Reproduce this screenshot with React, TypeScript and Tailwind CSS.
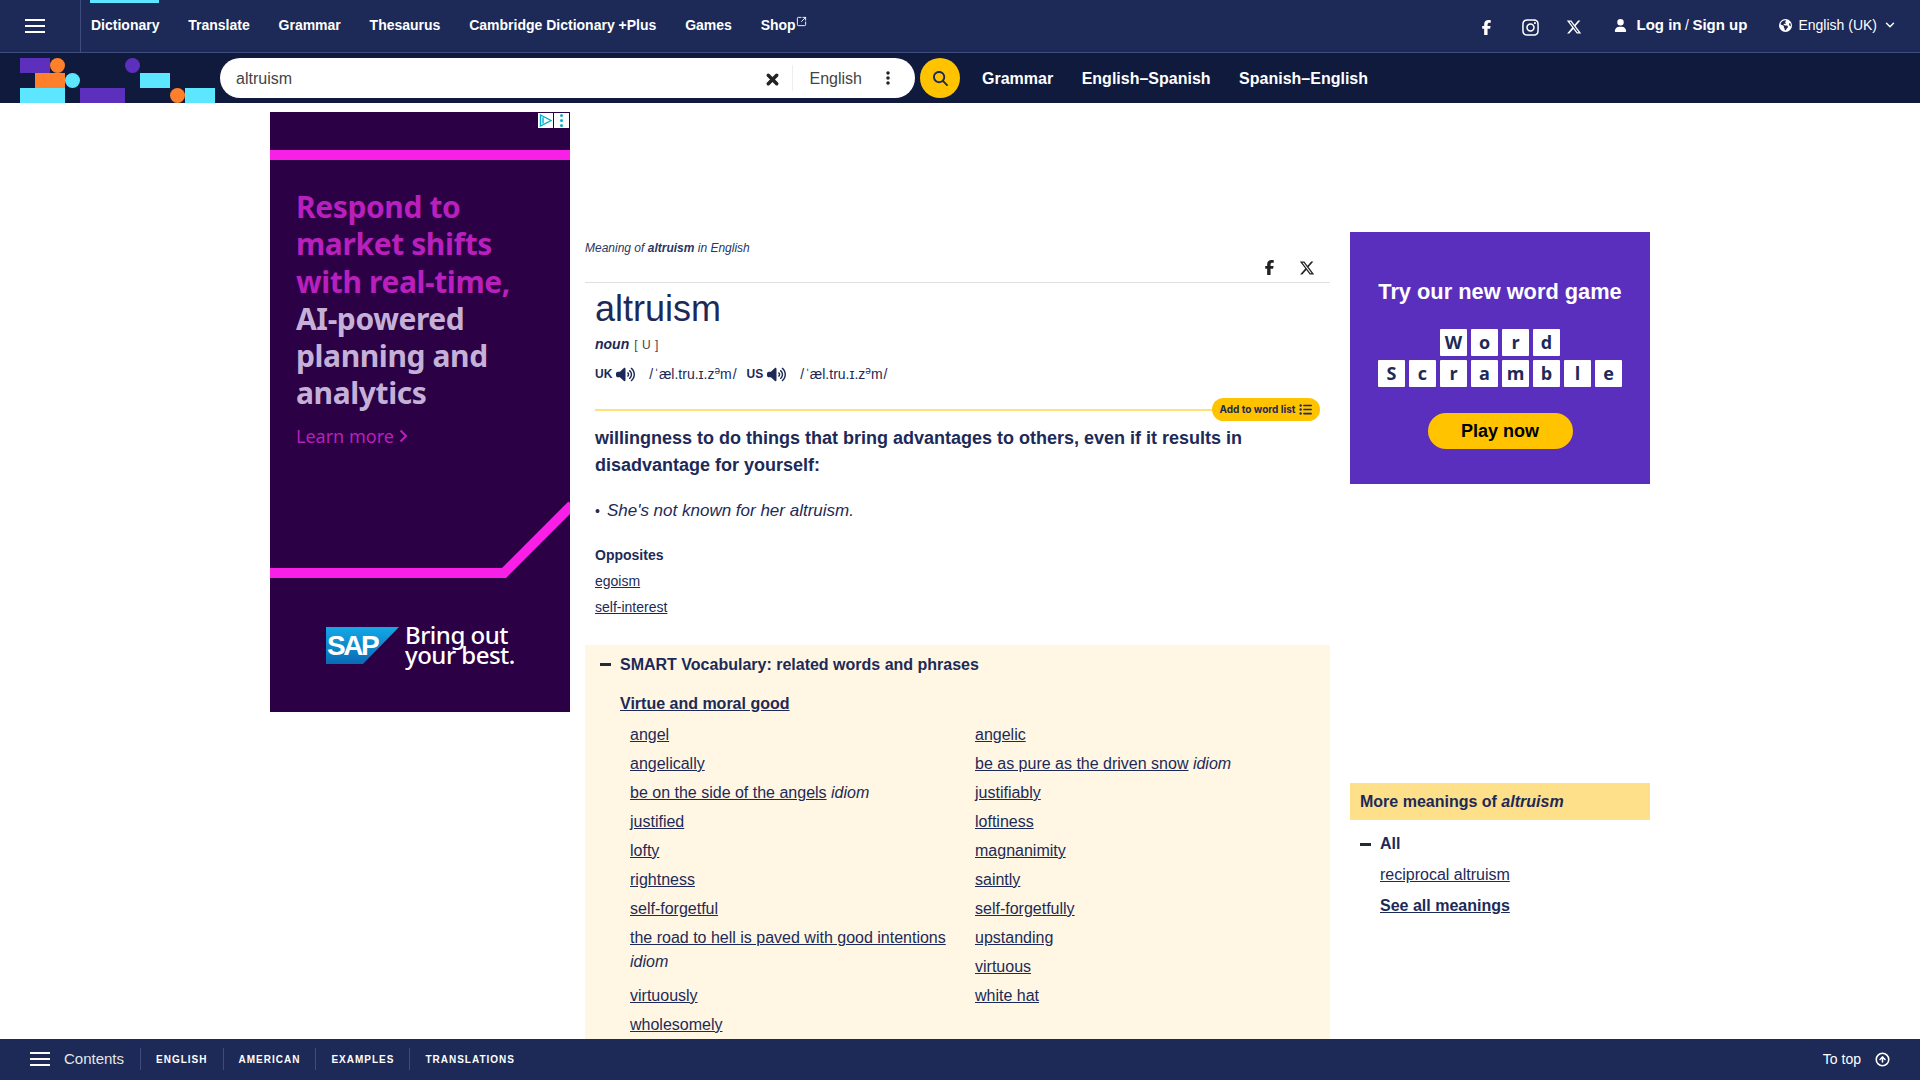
import { ChevronDown, SquareArrowOutUpRight, CircleArrowUp } from 'lucide-react';
import {
  FaFacebookF,
  FaInstagram,
  FaXTwitter,
  FaUser,
  FaEarthAmericas,
  FaXmark,
  FaEllipsisVertical,
  FaMagnifyingGlass,
  FaVolumeHigh,
  FaListUl,
} from 'react-icons/fa6';

const NAV = ['Dictionary', 'Translate', 'Grammar', 'Thesaurus', 'Cambridge Dictionary +Plus', 'Games'];

const LEFT_WORDS: [string, boolean?][] = [
  ['angel'],
  ['angelically'],
  ['be on the side of the angels', true],
  ['justified'],
  ['lofty'],
  ['rightness'],
  ['self-forgetful'],
  ['the road to hell is paved with good intentions', true],
  ['virtuously'],
  ['wholesomely'],
];

const RIGHT_WORDS: [string, boolean?][] = [
  ['angelic'],
  ['be as pure as the driven snow', true],
  ['justifiably'],
  ['loftiness'],
  ['magnanimity'],
  ['saintly'],
  ['self-forgetfully'],
  ['upstanding'],
  ['virtuous'],
  ['white hat'],
];

function Logo() {
  return (
    <svg width="195" height="45" viewBox="0 0 195 45" className="ml-5 shrink-0">
      <rect x="0" y="0" width="30" height="15" fill="#5d2fbd" />
      <circle cx="37.5" cy="7.5" r="7.5" fill="#ff7f2a" />
      <rect x="15" y="15" width="30" height="15" fill="#ff7f2a" />
      <circle cx="52.5" cy="22.5" r="7.5" fill="#5ce6ff" />
      <rect x="0" y="30" width="45" height="15" fill="#5ce6ff" />
      <rect x="60" y="30" width="45" height="15" fill="#5d2fbd" />
      <circle cx="112.5" cy="7.5" r="7.5" fill="#5d2fbd" />
      <rect x="120" y="15" width="30" height="15" fill="#5ce6ff" />
      <circle cx="157.5" cy="37.5" r="7.5" fill="#ff7f2a" />
      <rect x="165" y="30" width="30" height="15" fill="#5ce6ff" />
    </svg>
  );
}

function Hamburger({ className }: { className: string }) {
  return (
    <div className={className}>
      <div className="h-[2px] bg-white" />
      <div className="h-[2px] bg-white" />
      <div className="h-[2px] bg-white" />
    </div>
  );
}

function Dash() {
  return <div className="w-[11px] h-[3px] bg-[#222a3a] shrink-0" />;
}

function WordItem({ word, idiom }: { word: string; idiom?: boolean }) {
  const twoLines = word.startsWith('the road');
  return (
    <div className={twoLines ? 'text-[16px] leading-[24px] mb-[10px]' : 'text-[16px] leading-[24px] mb-[5px]'}>
      <span className="underline">{word}</span>
      {idiom && <i> idiom</i>}
    </div>
  );
}

function Tiles({ text }: { text: string }) {
  return (
    <div className="flex justify-center gap-[4px]">
      {text.split('').map((c, i) => (
        <div
          key={i}
          className="w-[27px] h-[27px] bg-white rounded-[1px] flex items-center justify-center text-[#1d2a57] text-[18px] font-bold font-['Open_Sans',sans-serif]"
        >
          {c}
        </div>
      ))}
    </div>
  );
}

function Ipa() {
  return (
    <span className="ml-[14px]">
      <span className="mr-[1px]">/</span>ˈæl.tru.ɪ.z<sup className="text-[10px] leading-none">ə</sup>m<span className="ml-[1px]">/</span>
    </span>
  );
}

function Ad() {
  return (
    <div className="relative w-[300px] h-[600px] bg-[#2c0045] shrink-0 overflow-hidden font-['Noto_Sans',sans-serif]">
      <svg width="300" height="600" viewBox="0 0 300 600" className="absolute inset-0">
        <rect x="0" y="38" width="300" height="10" fill="#f81fe6" />
        <path d="M0 461 H234 L302 393" fill="none" stroke="#f81fe6" strokeWidth="10" />
      </svg>
      <div className="absolute top-[1px] right-[1px] flex gap-[1px]">
        <div className="w-[15px] h-[15px] bg-white flex items-center justify-center">
          <svg width="13" height="13" viewBox="0 0 13 13">
            <path d="M1.5 1 L12 6.5 L1.5 12 Z M4 3.5 V9.5" fill="none" stroke="#00aecd" strokeWidth="1.4" />
          </svg>
        </div>
        <div className="w-[15px] h-[15px] bg-white flex flex-col items-center justify-center gap-[2px]">
          <div className="w-[3px] h-[3px] rounded-full bg-[#00aecd]" />
          <div className="w-[3px] h-[3px] rounded-full bg-[#00aecd]" />
          <div className="w-[3px] h-[3px] rounded-full bg-[#00aecd]" />
        </div>
      </div>
      <div className="relative pl-[26px] pt-[76px]">
        <div className="text-[30px] leading-[37.3px] font-bold text-[#b81fbc] tracking-[-0.4px]">
          Respond to
          <br />
          market shifts
          <br />
          with real-time,
        </div>
        <div className="text-[30px] leading-[37.3px] font-bold text-[#c5b0d8] tracking-[-0.4px]">
          AI-powered
          <br />
          planning and
          <br />
          analytics
        </div>
        <div className="mt-[12px] text-[18px] leading-[24px] text-[#b81fbc] flex items-center gap-[5px]">
          Learn more
          <svg width="9" height="14" viewBox="0 0 9 14">
            <path d="M1.5 1.5 L7 7 L1.5 12.5" fill="none" stroke="#b81fbc" strokeWidth="2" />
          </svg>
        </div>
      </div>
      <div className="absolute left-[56px] top-[515px] flex items-start gap-[6px]">
        <div className="relative w-[73px] h-[37px]">
          <svg width="73" height="37" viewBox="0 0 73 37" className="absolute inset-0">
            <defs>
              <linearGradient id="sapBlue" x1="0" y1="0" x2="0" y2="1">
                <stop offset="0" stopColor="#14a8e6" />
                <stop offset="1" stopColor="#0a6ab5" />
              </linearGradient>
            </defs>
            <path d="M0 0 H73 L37 37 H0 Z" fill="url(#sapBlue)" />
          </svg>
          <div className="relative pl-[1px] pt-[4px] text-[28px] leading-[30px] font-bold text-white font-['Liberation_Sans',sans-serif] tracking-[-2.5px]">
            SAP
          </div>
        </div>
        <div className="text-[24px] leading-[20px] font-medium text-white tracking-[-0.5px] -mt-[2px]">
          Bring out
          <br />
          your best.
        </div>
      </div>
    </div>
  );
}

export default function App() {
  return (
    <div className="relative h-screen overflow-hidden bg-white text-[#1d2a57] font-['Liberation_Sans',Arial,sans-serif]">
      {/* Top nav */}
      <div className="h-[53px] bg-[#1d2a57] border-b border-[#3f4c7e] flex items-stretch text-white">
        <div className="w-[81px] border-r border-[#3f4c7e] flex items-center shrink-0">
          <Hamburger className="ml-[25px] w-[20px] flex flex-col gap-[4px]" />
        </div>
        <div className="flex items-stretch gap-[28.8px] ml-[9px] text-[14px] font-bold">
          {NAV.map((item, i) => (
            <div key={item} className="relative flex items-center pb-[2px] first:pl-[1px]">
              {i === 0 && <div className="absolute top-0 left-0 right-0 h-[3px] bg-[#5ce6ff]" />}
              {item}
            </div>
          ))}
          <div className="flex items-center pb-[2px]">
            Shop
            <SquareArrowOutUpRight size={11} className="-mt-[8px]" />
          </div>
        </div>
        <div className="ml-auto flex items-center pb-[2px]">
          <FaFacebookF size={15} className="mr-[27px] mt-[4px]" />
          <FaInstagram size={19} className="mr-[26px] mt-[4px]" />
          <FaXTwitter size={16} className="mr-[32px] mt-[4px]" />
          <FaUser size={13} className="mr-[10px]" />
          <span className="text-[15px] font-bold">Log in</span>
          <span className="text-[14px] mx-[3.5px]">/</span>
          <span className="text-[15px] font-bold">Sign up</span>
          <FaEarthAmericas size={13} className="ml-[32px] mr-[6px]" />
          <span className="text-[14px]">English (UK)</span>
          <ChevronDown size={14} strokeWidth={2.5} className="ml-[6px] mr-[23px]" />
        </div>
      </div>

      {/* Search bar */}
      <div className="h-[50px] bg-[#0f1a3d] flex items-end text-white">
        <Logo />
        <div className="self-center ml-[5px] w-[695px] h-[40px] bg-white rounded-full flex items-center text-[#444] text-[16px]">
          <span className="pl-[16px] flex-1 pt-[2px]">altruism</span>
          <FaXmark size={17} stroke="currentColor" strokeWidth={40} className="text-[#222] mr-[11px] mt-[3px]" />
          <div className="w-px h-[26px] bg-[#eeeeee]" />
          <span className="ml-[17px] pt-[2px]">English</span>
          <FaEllipsisVertical size={16} className="text-[#222] ml-[18px] mr-[19px]" />
        </div>
        <div className="self-center ml-[5px] w-[40px] h-[40px] rounded-full bg-[#ffc300] flex items-center justify-center">
          <FaMagnifyingGlass size={15} className="text-[#1d2a57]" />
        </div>
        <div className="self-center ml-[22px] flex gap-[28.5px] text-[16px] font-bold pt-[2px]">
          <span>Grammar</span>
          <span>English–Spanish</span>
          <span>Spanish–English</span>
        </div>
      </div>

      {/* Page */}
      <div className="w-[1380px] mx-auto flex items-start pt-[9px]">
        <Ad />

        <main className="w-[745px] ml-[15px] shrink-0 pt-[126px]">
          <div className="h-[45px] border-b border-[#dfdfdf] flex justify-between">
            <div className="text-[12px] leading-[20px] italic text-[#2a3663]">
              Meaning of <b>altruism</b> in English
            </div>
            <div className="flex items-start gap-[22px] pt-[22px] pr-[15px] text-[#222]">
              <FaFacebookF size={15} />
              <FaXTwitter size={16} />
            </div>
          </div>

          <div className="pl-[10px] pr-[10px]">
            <h1 className="text-[36px] leading-[44px] mt-[4px] font-normal">altruism</h1>
            <div className="mt-[3px] text-[14px] leading-[20px]">
              <b>
                <i>noun</i>
              </b>
              <span className="text-[12px] text-[#444] ml-[5px] tracking-[0.5px]">[ U ]</span>
            </div>
            <div className="mt-[9px] text-[14px] leading-[20px] flex items-center">
              <b className="text-[12px]">UK</b>
              <FaVolumeHigh size={19} className="ml-[4px]" />
              <Ipa />
              <b className="text-[12px] ml-[10px]">US</b>
              <FaVolumeHigh size={19} className="ml-[4px]" />
              <Ipa />
            </div>
            <div className="mt-[14px] flex items-center">
              <div className="flex-1 h-[2px] bg-[#ffe07d]" />
              <div className="h-[23px] w-[108px] rounded-full bg-[#ffc300] flex items-center justify-center gap-[4px] text-[10px] font-bold font-['Inter',sans-serif] text-[#1d2a57]">
                Add to word list
                <FaListUl size={13} />
              </div>
            </div>
            <div className="mt-[4px] text-[18px] leading-[27px] font-bold">
              willingness to do things that bring advantages to others, even if it results in disadvantage for yourself:
            </div>
            <div className="mt-[18px] text-[17px] leading-[27px]">
              <span className="text-[14px] mr-[7px]">•</span>
              <i>She's not known for her altruism.</i>
            </div>
            <div className="mt-[17px] text-[14px] leading-[26px]">
              <b>Opposites</b>
              <div className="underline">egoism</div>
              <div className="underline">self-interest</div>
            </div>
          </div>

          <div className="mt-[25px] bg-[#fff7e4] px-[15px] pb-[40px]">
            <div className="flex items-center h-[39px] text-[16px] font-bold">
              <Dash />
              <span className="ml-[9px]">SMART Vocabulary: related words and phrases</span>
            </div>
            <div className="pl-[20px]">
              <div className="mt-[8px] text-[16px] leading-[24px] font-bold underline">Virtue and moral good</div>
              <div className="mt-[7px] flex pl-[10px]">
                <div className="w-[345px] pr-[5px] shrink-0">
                  {LEFT_WORDS.map(([w, id]) => (
                    <WordItem key={w} word={w} idiom={id} />
                  ))}
                </div>
                <div className="w-[345px]">
                  {RIGHT_WORDS.map(([w, id]) => (
                    <WordItem key={w} word={w} idiom={id} />
                  ))}
                </div>
              </div>
            </div>
          </div>
        </main>

        <aside className="w-[300px] ml-[20px] shrink-0 pt-[120px]">
          <div className="h-[252px] bg-[#5a2fbd] flex flex-col items-center">
            <div className="mt-[48px] text-[21.8px] leading-[24px] font-bold text-white">Try our new word game</div>
            <div className="mt-[25px] flex flex-col gap-[4px]">
              <Tiles text="Word" />
              <Tiles text="Scramble" />
            </div>
            <div className="mt-[26px] w-[145px] h-[36px] rounded-full bg-[#ffc300] flex items-center justify-center text-[18px] font-bold text-black">
              Play now
            </div>
          </div>

          <div className="mt-[299px] h-[37px] bg-[#ffe08a] px-[10px] flex items-center text-[16px] font-bold">
            More meanings of&nbsp;<i>altruism</i>
          </div>
          <div className="pl-[10px] text-[16px] leading-[24px]">
            <div className="mt-[12px] flex items-center font-bold">
              <Dash />
              <span className="ml-[9px]">All</span>
            </div>
            <div className="ml-[20px] mt-[7px] underline">reciprocal altruism</div>
            <div className="ml-[20px] mt-[7px] underline font-bold">See all meanings</div>
          </div>
        </aside>
      </div>

      {/* Bottom bar */}
      <div className="fixed bottom-0 left-0 right-0 h-[41px] bg-[#1d2a57] text-white flex items-center pb-[1px]">
        <Hamburger className="ml-[30px] w-[20px] flex flex-col gap-[4px]" />
        <span className="ml-[14px] text-[15px] text-[#e6e6e6]">Contents</span>
        <div className="ml-[16px] w-px h-[22px] bg-[#3f4c7e]" />
        <span className="mx-[15px] text-[10px] font-bold tracking-[1px]">ENGLISH</span>
        <div className="w-px h-[22px] bg-[#3f4c7e]" />
        <span className="mx-[15px] text-[10px] font-bold tracking-[1px]">AMERICAN</span>
        <div className="w-px h-[22px] bg-[#3f4c7e]" />
        <span className="mx-[15px] text-[10px] font-bold tracking-[1px]">EXAMPLES</span>
        <div className="w-px h-[22px] bg-[#3f4c7e]" />
        <span className="mx-[15px] text-[10px] font-bold tracking-[1px]">TRANSLATIONS</span>
        <div className="ml-auto flex items-center mr-[30px] text-[14px]">
          To top
          <CircleArrowUp size={15} strokeWidth={2.5} className="ml-[14px]" />
        </div>
      </div>
    </div>
  );
}
